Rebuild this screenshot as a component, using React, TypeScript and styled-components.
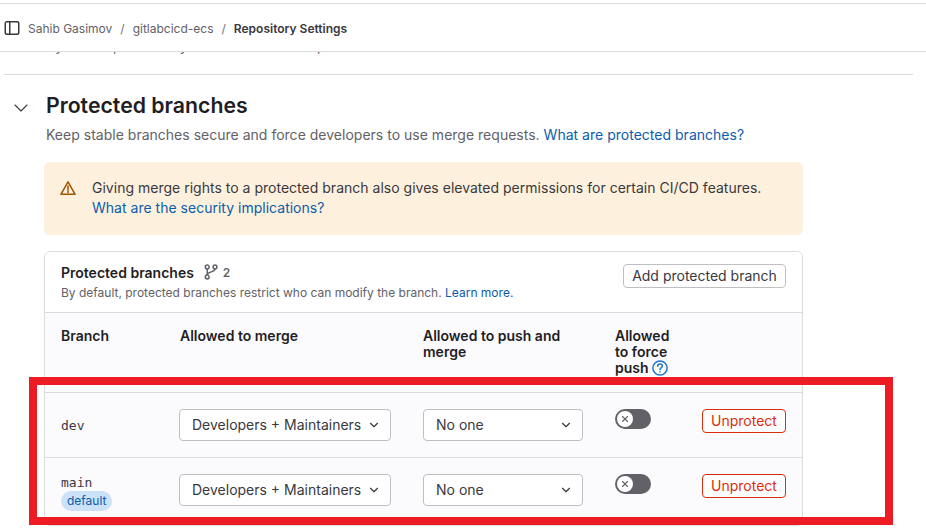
import React from "react";
import styled, { createGlobalStyle } from "styled-components";
import { ChevronDown, X } from "lucide-react";

const GlobalStyle = createGlobalStyle`
  html, body {
    margin: 0;
    height: 100%;
    overflow: hidden;
    background: #fff;
    font-family: Inter, "Noto Sans", sans-serif;
    font-size: 14px;
    color: #3a383f;
  }
  * { box-sizing: border-box; }
`;

const branches = [
  { name: "dev", isDefault: false },
  { name: "main", isDefault: true },
];

const SidebarIcon = () => (
  <svg width="16" height="16" viewBox="0 0 16 16" fill="none" stroke="#3a383f" strokeWidth="1.5">
    <rect x="1.25" y="1.75" width="13.5" height="12.5" rx="1.5" />
    <path d="M5.75 1.75v12.5" />
  </svg>
);

const WarningIcon = () => (
  <svg width="16" height="16" viewBox="0 0 16 16" fill="none" stroke="#9e5400" strokeWidth="1.5" strokeLinejoin="round">
    <path d="M8 1.9 15 14.2H1Z" />
    <path d="M8 6v4.2M8 11.4v1.2" strokeLinecap="round" />
  </svg>
);

const BranchIcon = () => (
  <svg width="14" height="16" viewBox="0 0 14 16" fill="none" stroke="#626168" strokeWidth="1.5">
    <circle cx="3.2" cy="3" r="1.9" />
    <circle cx="11" cy="3" r="1.9" />
    <circle cx="3.2" cy="13" r="1.9" />
    <path d="M3.2 5v6M11 5c0 3.2-7.8 2.5-7.8 6" />
  </svg>
);

const HelpIcon = () => (
  <svg width="16" height="16" viewBox="0 0 16 16" fill="none" stroke="#1f75cb" strokeWidth="1.5">
    <circle cx="8" cy="8" r="7.1" />
    <path d="M5.7 6.2c0-1.3 1-2.1 2.3-2.1s2.3.8 2.3 2c0 1.9-2.3 1.7-2.3 3.4" strokeLinecap="round" />
    <path d="M8 11.2v1.3" />
  </svg>
);

export default function App() {
  return (
    <Page>
      <GlobalStyle />
      <TopBar>
        <SidebarIcon />
        <Crumbs>
          <Crumb>Sahib Gasimov</Crumb>
          <Slash>/</Slash>
          <Crumb>gitlabcicd-ecs</Crumb>
          <Slash>/</Slash>
          <CurrentCrumb>Repository Settings</CurrentCrumb>
        </Crumbs>
      </TopBar>
      <ScrolledLine>
        <ScrolledText>By default, all the keys that are used in a pool of the</ScrolledText>
      </ScrolledLine>
      <Section>
        <SectionHead>
          <Collapse>
            <ChevronDown size={24} strokeWidth={1.1} />
          </Collapse>
          <Title>Protected branches</Title>
        </SectionHead>
        <Description>
          Keep stable branches secure and force developers to use merge requests.{" "}
          <a href="#protected">What are protected branches?</a>
        </Description>
        <Alert>
          <WarningIcon />
          <AlertText>
            Giving merge rights to a protected branch also gives elevated permissions for certain CI/CD features.
            <br />
            <a href="#security">What are the security implications?</a>
          </AlertText>
        </Alert>
        <Card>
          <CardHeader>
            <div>
              <CardTitle>
                Protected branches
                <Count>
                  <BranchIcon />2
                </Count>
              </CardTitle>
              <CardHint>
                By default, protected branches restrict who can modify the branch.{" "}
                <a href="#more">Learn more.</a>
              </CardHint>
            </div>
            <AddButton>Add protected branch</AddButton>
          </CardHeader>
          <HeadRow>
            <span>Branch</span>
            <span>Allowed to merge</span>
            <span>Allowed to push and merge</span>
            <ForceHead>
              Allowed to force push <HelpIcon />
            </ForceHead>
          </HeadRow>
          {branches.map((branch) => (
            <BranchRow key={branch.name} $tall={branch.isDefault}>
              <BranchCell>
                <BranchName>{branch.name}</BranchName>
                {branch.isDefault && <DefaultBadge>default</DefaultBadge>}
              </BranchCell>
              <Select $width={212}>
                Developers + Maintainers
                <ChevronDown size={14} strokeWidth={2} />
              </Select>
              <Select $width={160}>
                No one
                <ChevronDown size={14} strokeWidth={2} />
              </Select>
              <Toggle>
                <Knob>
                  <X size={10} strokeWidth={2.6} />
                </Knob>
              </Toggle>
              <UnprotectButton>Unprotect</UnprotectButton>
            </BranchRow>
          ))}
        </Card>
      </Section>
      <Highlight />
    </Page>
  );
}

const Page = styled.div`
  position: relative;
  width: 926px;
  height: 529px;
  overflow: hidden;
  padding-top: 3px;

  a {
    color: #0b5cad;
    text-decoration: none;
  }
`;

const TopBar = styled.header`
  display: flex;
  align-items: center;
  gap: 8px;
  height: 49px;
  padding: 1px 0 0 4px;
  border-top: 1px solid #dcdcde;
  border-bottom: 1px solid #dcdcde;
`;

const Crumbs = styled.nav`
  display: flex;
  align-items: center;
  gap: 7px;
  font-size: 12px;
`;

const Crumb = styled.span`
  color: #626168;
`;

const Slash = styled.span`
  color: #737278;
  margin: 0 1px;
`;

const CurrentCrumb = styled.span`
  color: #3a383f;
  font-weight: 600;
`;

const ScrolledLine = styled.div`
  height: 23px;
  margin: 0 13px 0 4px;
  padding-left: 42px;
  overflow: hidden;
  border-bottom: 1px solid #dcdcde;
`;

const ScrolledText = styled.div`
  margin-top: -16px;
  line-height: 20px;
  white-space: nowrap;
  color: #626168;
`;

const Section = styled.section`
  padding: 17px 0 0 44px;
`;

const SectionHead = styled.div`
  position: relative;
  height: 28px;
`;

const Collapse = styled.span`
  position: absolute;
  left: -35px;
  top: 4px;
  display: flex;
  color: #3a383f;
`;

const Title = styled.h2`
  margin: 0 0 0 2px;
  font-size: 21.25px;
  line-height: 26px;
  font-weight: 600;
  color: #1f1e24;
`;

const Description = styled.p`
  margin: 5px 0 17px 2px;
  line-height: 20px;
  letter-spacing: 0.012px;
  color: #626168;
`;

const Alert = styled.div`
  display: flex;
  gap: 16px;
  width: 759px;
  height: 73px;
  padding: 16px;
  border-radius: 6px;
  background: #fdf1dd;

  svg {
    flex: none;
    margin-top: 2px;
  }
`;

const AlertText = styled.div`
  line-height: 20px;
  letter-spacing: 0.012px;
  color: #3a383f;
`;

const Card = styled.div`
  width: 759px;
  height: 275px;
  margin-top: 16px;
  border: 1px solid #dcdcde;
  border-radius: 6px;
  overflow: hidden;
`;

const CardHeader = styled.div`
  display: flex;
  justify-content: space-between;
  align-items: flex-start;
  height: 61px;
  padding: 11px 16px;
  background: #fff;
  border-bottom: 1px solid #dcdcde;
`;

const CardTitle = styled.div`
  display: flex;
  align-items: center;
  gap: 10px;
  height: 18px;
  font-size: 14px;
  font-weight: 600;
  color: #1f1e24;
`;

const Count = styled.span`
  display: flex;
  align-items: center;
  gap: 5px;
  font-size: 12px;
  color: #626168;
`;

const CardHint = styled.div`
  margin-top: 4px;
  font-size: 12px;
  line-height: 16px;
  color: #626168;
`;

const AddButton = styled.button`
  height: 24px;
  width: 163px;
  padding: 0 0 1px;
  margin-top: 1px;
  border: 1px solid #bfbfc3;
  border-radius: 4px;
  background: #fff;
  font: inherit;
  color: #3a383f;
`;

const columns = "118px 244px 192px 87px 84px";

const HeadRow = styled.div`
  display: grid;
  grid-template-columns: ${columns};
  height: 80px;
  padding: 15px 0 0 16px;
  background: #fbfafd;
  border-bottom: 1px solid #dcdcde;
  font-size: 14px;
  line-height: 16px;
  font-weight: 600;
  color: #1f1e24;

  > span:nth-child(2) {
    margin-left: 1px;
  }

  > span:nth-child(3) {
    width: 170px;
  }
`;

const ForceHead = styled.span`
  width: 60px;

  svg {
    vertical-align: -3px;
  }
`;

const BranchRow = styled.div<{ $tall: boolean }>`
  display: grid;
  grid-template-columns: ${columns};
  align-items: start;
  height: ${(p) => (p.$tall ? "68px" : "65px")};
  padding: 16px 0 0 16px;
  background: #fbfafd;
  border-bottom: ${(p) => (p.$tall ? "0" : "1px solid #dcdcde")};
`;

const BranchCell = styled.div`
  display: flex;
  flex-direction: column;
  align-items: flex-start;
  justify-content: center;
  min-height: 32px;
  padding-top: 1px;
`;

const BranchName = styled.code`
  font-family: "DejaVu Sans Mono", "Liberation Mono", monospace;
  font-size: 13px;
  line-height: 16px;
  color: #3a383f;
`;

const DefaultBadge = styled.span`
  height: 20px;
  padding: 0 6px;
  border-radius: 10px;
  background: #cbe2f9;
  font-size: 12px;
  line-height: 20px;
  color: #0b5cad;
`;

const Select = styled.div<{ $width: number }>`
  display: flex;
  align-items: center;
  justify-content: space-between;
  width: ${(p) => p.$width}px;
  height: 32px;
  padding: 0 9px 1px 12px;
  border: 1px solid #bfbfc3;
  border-radius: 4px;
  background: #fff;
  color: #3a383f;
`;

const Toggle = styled.div`
  display: flex;
  align-items: center;
  width: 36px;
  height: 20px;
  padding-left: 2px;
  border-radius: 10px;
  background: #626168;
`;

const Knob = styled.span`
  display: flex;
  align-items: center;
  justify-content: center;
  width: 16px;
  height: 16px;
  border-radius: 50%;
  background: #fff;
  color: #626168;
`;

const UnprotectButton = styled.button`
  width: 84px;
  height: 24px;
  padding: 0 0 1px;
  border: 1px solid #dd2b0e;
  border-radius: 4px;
  background: #fff;
  font: inherit;
  color: #dd2b0e;
`;

const Highlight = styled.div`
  position: absolute;
  left: 29px;
  top: 377px;
  width: 864px;
  height: 148px;
  border: 8px solid #ed1c24;
  pointer-events: none;
`;
